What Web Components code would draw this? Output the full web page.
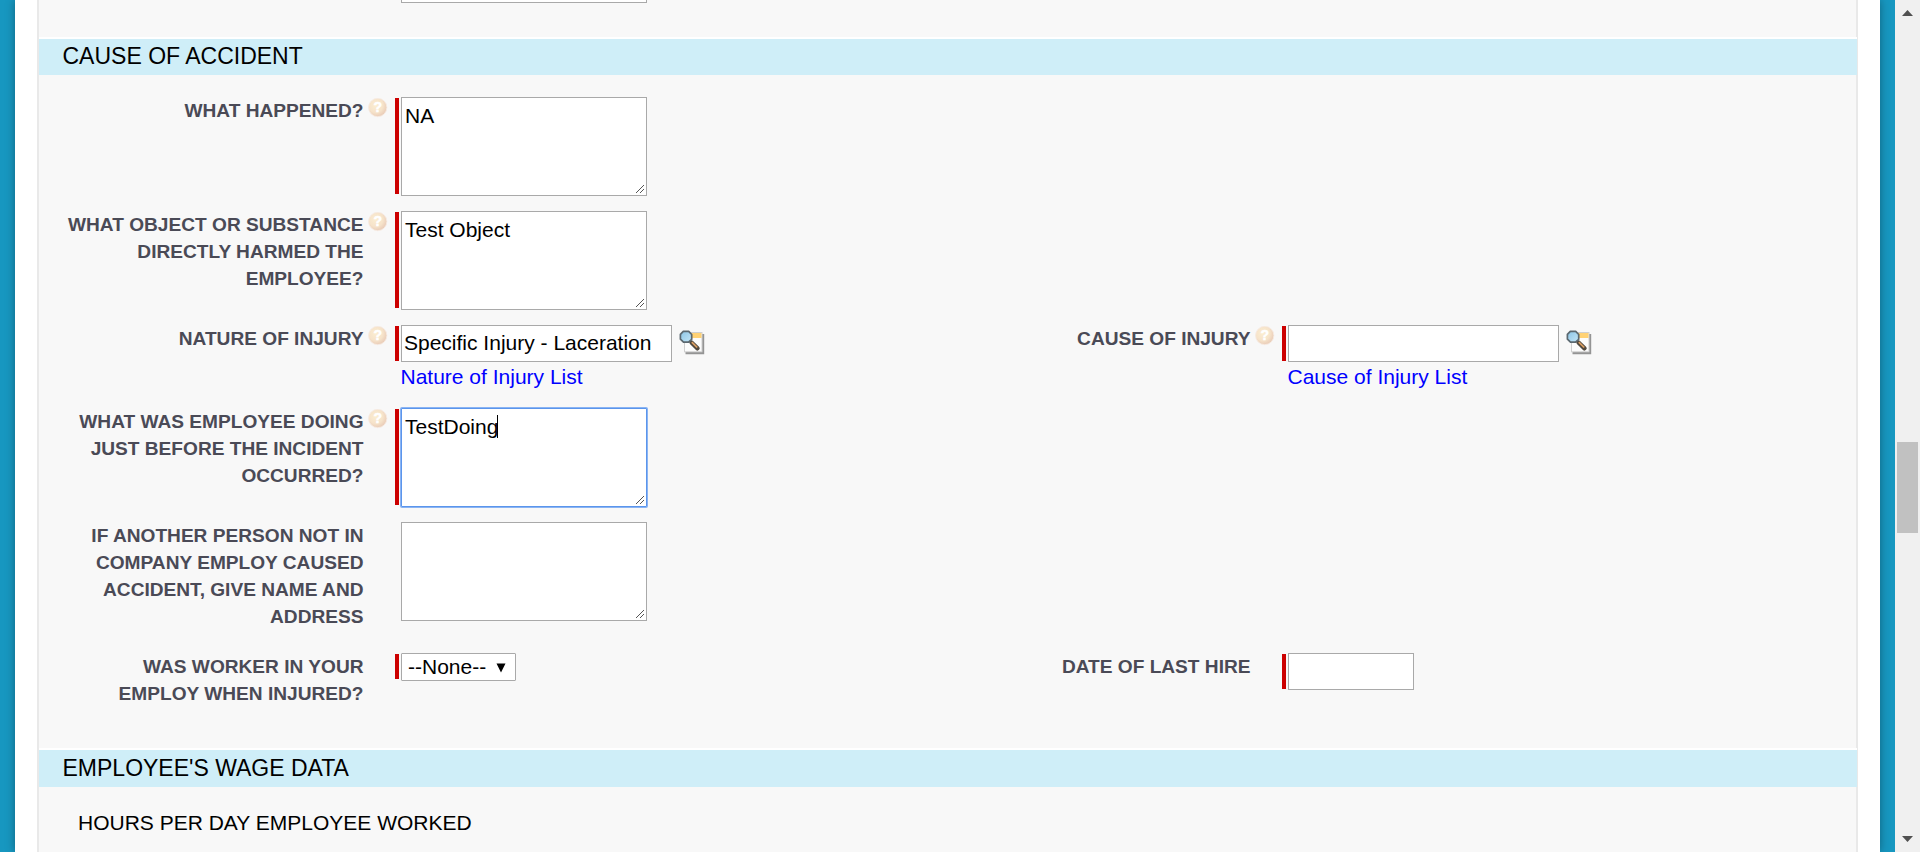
<!DOCTYPE html>
<html lang="en">
<head>
<meta charset="utf-8">
<title>Accident report</title>
<style>
html,body{margin:0;height:100%;overflow:hidden;font-family:"Liberation Sans",Arial,sans-serif}
</style>
</head>
<body>
<report-page></report-page>
<script>
const define = (name, html, setup) => {
  const t = document.createElement('template');
  t.innerHTML = html;
  customElements.define(name, class extends HTMLElement {
    constructor() {
      super();
      this.attachShadow({mode: 'open'}).append(t.content.cloneNode(true));
    }
    connectedCallback() { if (setup) setup(this, this.shadowRoot); }
  });
};

define('help-orb', `
<style>:host{display:block;width:20px;height:20px}svg{display:block}</style>
<svg width="20" height="20" viewBox="0 0 20 20">
  <defs>
    <radialGradient id="g" cx=".4" cy=".38" r=".65"><stop offset="0" stop-color="#fbeed2"/><stop offset=".6" stop-color="#f6e3ca"/><stop offset="1" stop-color="#e8cab6"/></radialGradient>
  </defs>
  <circle cx="9.700" cy="9.500" r="9.200" fill="url(#g)"/>
  <circle cx="9.700" cy="9.500" r="9.200" fill="none" stroke="#f6ebe3" stroke-width=".9"/>
  <text x="9.700" y="14.200" text-anchor="middle" font-family="Liberation Sans" font-weight="700" font-size="14" fill="#fff" stroke="#fff" stroke-width=".5">?</text>
</svg>`);

define('lookup-icon', `
<style>:host{display:block;width:26px;height:26px}svg{display:block}</style>
<svg width="26" height="26" viewBox="0 0 26 26">
  <defs><linearGradient id="l" x1="0" y1="0" x2="1" y2="1"><stop offset="0" stop-color="#8cc5e6"/><stop offset="1" stop-color="#c4e6f7"/></linearGradient></defs>
  <path d="M6.500 23H24V4" fill="none" stroke="#949494" stroke-width="2.400"/>
  <rect x="5.500" y="2.500" width="17.500" height="19.300" fill="#fcfcfc" stroke="#cfcfcf" stroke-width="1"/>
  <rect x="12" y="3" width="10.500" height="5" fill="#ffd275"/>
  <path d="M12.500 12.500L18.500 18.300" stroke="#51493f" stroke-width="4.400" stroke-linecap="round"/>
  <path d="M12.800 12.200L18.200 17.500" stroke="#dda063" stroke-width="1.700"/>
  <path d="M4.300 1.400H9.700L12.700 4.500V9.300L9.500 12.200H4.500L1.400 9.200V4.400Z" fill="url(#l)" stroke="#5b6870" stroke-width="1.700" stroke-linejoin="round"/>
</svg>`);

define('resize-grip', `
<style>:host{display:block;width:9px;height:9px}svg{display:block}</style>
<svg width="9" height="9" viewBox="0 0 9 9" shape-rendering="crispEdges"><path d="M.5 8.500L8.500 .5M4.500 8.500L8.500 4.500" stroke="#555" stroke-width="1"/></svg>`);

define('text-area', `
<style>
:host{display:flex;box-sizing:border-box;width:246px;height:99px;border:1px solid #a9a9a9;background:#fff;padding:6px 2px 1px 3px;justify-content:space-between;font-size:21px;line-height:24px;color:#000;white-space:nowrap}
:host([focused]){border-color:#5b95ec;box-shadow:0 0 0 1px #8ab4f3;border-radius:1px}
resize-grip{align-self:flex-end}
.t{display:flex}
i{display:none;width:1px;height:23px;background:#000;margin-left:-1px}
:host([focused]) i{display:block}
</style><div class="t"><span><slot></slot></span><i></i></div><resize-grip></resize-grip>`);

define('text-input', `
<style>:host{display:block;box-sizing:border-box;width:var(--w,271px);height:37px;border:1px solid #a9a9a9;background:#fff;padding:5px 2px;font-size:21px;line-height:24px;color:#000;white-space:nowrap}</style><slot></slot>`);

define('select-box', `
<style>:host{display:flex;box-sizing:border-box;width:115px;height:28px;border:1px solid #a9a9a9;border-radius:1px;background:#fff;padding:1px 9px 0 6px;justify-content:space-between;font-size:21px;line-height:24px;color:#000;white-space:nowrap}
svg{display:block;margin-top:8px}</style><span><slot></slot></span>
<svg width="10" height="10" viewBox="0 0 10 10"><path d="M.5 .5H9.500L5 9.500Z" fill="#000"/></svg>`);

define('form-field', `
<style>
:host{display:grid;grid-template-columns:324.500px 31.500px 1fr;align-items:start}
.label{font-weight:700;font-size:19.120px;line-height:27px;color:#4a4a56;text-align:right;white-space:nowrap}
help-orb{margin:1px 0 0 4px;visibility:hidden}
:host([help]) help-orb{visibility:visible}
.control{display:flex;gap:2px}
.bar{width:4px;margin:1px 0 2px;flex:none}
:host([required]) .bar{background:#c00}
.short{margin-bottom:1px}
.line{display:flex}
</style>
<div class="label"><slot name="label"></slot></div><help-orb></help-orb>
<div><div class="line"><div class="control"><div class="bar"></div><slot></slot></div><slot name="icon"></slot></div><slot name="link"></slot></div>`,
(el, root) => { if (el.hasAttribute('single')) root.querySelector('.bar').classList.add('short'); });

define('field-link', `
<style>:host{display:block;margin:3px 0 0 5.500px;font-size:21px;line-height:24px;color:#00f;white-space:nowrap}</style><slot></slot>`);

define('form-row', `
<style>:host{display:grid;grid-template-columns:887px 1fr;height:var(--h,114px)}</style><slot></slot>`);

define('section-title', `
<style>:host{display:block;position:relative;box-sizing:border-box;height:var(--h,36px);margin-right:-1px;padding-left:23.500px;background:#cfeef8;box-shadow:0 -2px #fff;font-size:23px;line-height:var(--lh,34px);color:#000;white-space:nowrap}</style><slot></slot>`);

define('scroll-bar', `
<style>
:host{display:flex;flex-direction:column;width:25px;height:852px;background:#f0f0f0}
.up{margin:10px 0 0 7px}.thumb{width:21px;height:91px;margin:426px 0 0 2px;background:#c1c1c1}
.down{margin:303px 0 0 7px}svg{display:block}
</style>
<svg class="up" width="11" height="6" viewBox="0 0 11 6"><path d="M0 6L5.500 0L11 6Z" fill="#505050"/></svg>
<div class="thumb"></div>
<svg class="down" width="11" height="6" viewBox="0 0 11 6"><path d="M0 0H11L5.500 6Z" fill="#505050"/></svg>`);

define('report-page', `
<style>
:host{display:flex;width:1920px;height:852px;overflow:hidden;background:#1797c0}
.sheet{display:flex;flex:none;box-sizing:border-box;width:1865px;margin:0 15px;padding:0 22px;background:#fff;box-shadow:0 0 9px rgba(0,0,0,.35)}
.panel{box-sizing:border-box;width:1821px;border:solid #e9e9e9;border-width:0 2px;background:#f8f8f8}
.tail{display:flex;height:39px}
.tail div{box-sizing:border-box;width:246px;height:3px;margin-left:362px;border:1px solid #a9a9a9;border-top:0;background:#fff}
.fields{padding-top:22px;height:653px;display:flow-root}
lookup-icon{margin:5px 0 0 7px}
p{margin:24px 0 0 39px;font-size:21px;line-height:24px;white-space:nowrap}
scroll-bar{position:relative;flex:none}
</style>
<div class="sheet"><div class="panel">
  <div class="tail"><div></div></div>
  <section-title>CAUSE OF ACCIDENT</section-title>
  <div class="fields">
    <form-row><form-field required help><span slot="label">WHAT HAPPENED?</span><text-area>NA</text-area></form-field></form-row>
    <form-row><form-field required help><span slot="label">WHAT OBJECT OR SUBSTANCE<br>DIRECTLY HARMED THE<br>EMPLOYEE?</span><text-area>Test Object</text-area></form-field></form-row>
    <form-row style="--h:83px">
      <form-field required help single><span slot="label">NATURE OF INJURY</span><text-input>Specific Injury - Laceration</text-input><lookup-icon slot="icon"></lookup-icon><field-link slot="link">Nature of Injury List</field-link></form-field>
      <form-field required help single><span slot="label">CAUSE OF INJURY</span><text-input></text-input><lookup-icon slot="icon"></lookup-icon><field-link slot="link">Cause of Injury List</field-link></form-field>
    </form-row>
    <form-row><form-field required help><span slot="label">WHAT WAS EMPLOYEE DOING<br>JUST BEFORE THE INCIDENT<br>OCCURRED?</span><text-area focused>TestDoing</text-area></form-field></form-row>
    <form-row style="--h:131px"><form-field><span slot="label">IF ANOTHER PERSON NOT IN<br>COMPANY EMPLOY CAUSED<br>ACCIDENT, GIVE NAME AND<br>ADDRESS</span><text-area></text-area></form-field></form-row>
    <form-row style="--h:90px">
      <form-field required><span slot="label">WAS WORKER IN YOUR<br>EMPLOY WHEN INJURED?</span><select-box>--None--</select-box></form-field>
      <form-field required single><span slot="label">DATE OF LAST HIRE</span><text-input style="--w:126px"></text-input></form-field>
    </form-row>
  </div>
  <section-title style="--h:37px;--lh:36px">EMPLOYEE'S WAGE DATA</section-title>
  <p>HOURS PER DAY EMPLOYEE WORKED</p>
</div></div>
<scroll-bar></scroll-bar>`);
</script>
</body>
</html>
